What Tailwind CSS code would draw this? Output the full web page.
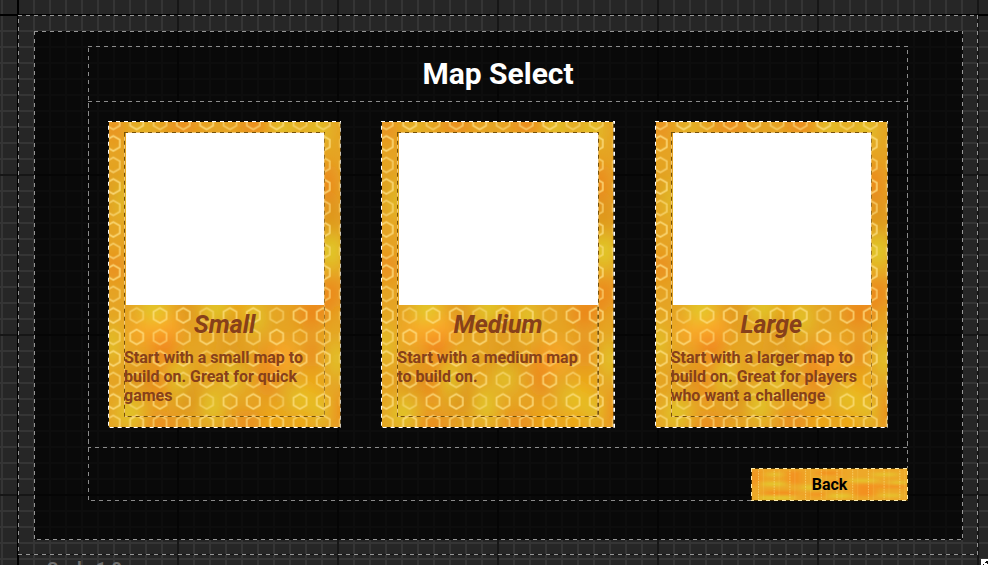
<!DOCTYPE html>
<html lang="en">
<head>
<meta charset="utf-8">
<meta name="viewport" content="width=device-width, initial-scale=1">
<title>Map Select</title>
<script src="https://cdn.jsdelivr.net/npm/@tailwindcss/browser@4"></script>
</head>
<body class="relative flex min-h-screen flex-col overflow-hidden bg-[#262626] font-[Roboto,sans-serif] font-bold">

<!-- Shared artwork -->
<svg class="absolute h-0 w-0" aria-hidden="true">
  <defs>
    <pattern id="grid" x="17" y="14" width="16" height="16" patternUnits="userSpaceOnUse">
      <path d="M0 0H16V2H2V16H0Z" fill="#353535"/>
    </pattern>
    <pattern id="gridMajor" x="17" y="14" width="160" height="160" patternUnits="userSpaceOnUse">
      <path d="M0 0H160V2H2V160H0Z" fill="#161616"/>
    </pattern>
    <filter id="soft" x="-50%" y="-50%" width="200%" height="200%"><feGaussianBlur stdDeviation="8 10"/></filter>
    <filter id="softSmall" x="-50%" y="-50%" width="200%" height="200%"><feGaussianBlur stdDeviation="5 1.4"/></filter>
    <path id="hex" d="M0 -7.5L6.5 -3.75V3.75L0 7.5L-6.5 3.75V-3.75Z"/>
    <pattern id="comb" x="-6.3" y="11.7" width="69.9" height="43" patternUnits="userSpaceOnUse">
      <g fill="none" stroke="#ffe287" stroke-width="1.7">
        <use href="#hex" x="11.6" y="10.8" opacity=".8"/>
        <use href="#hex" x="34.9" y="10.8" opacity=".55"/>
        <use href="#hex" x="58.2" y="10.8" opacity=".75"/>
        <use href="#hex" x="11.6" y="32.3" opacity=".65"/>
        <use href="#hex" x="34.9" y="32.3" opacity=".8"/>
        <use href="#hex" x="58.2" y="32.3" opacity=".6"/>
      </g>
    </pattern>
    <symbol id="honey" viewBox="0 0 233 307" preserveAspectRatio="none">
      <rect width="233" height="307" fill="#e5a424"/>
      <g filter="url(#soft)">
        <g fill="#dd941c">
          <ellipse cx="32" cy="257" rx="14" ry="12"/><ellipse cx="80" cy="275" rx="12" ry="20"/>
          <ellipse cx="78" cy="195" rx="9" ry="16"/><ellipse cx="125" cy="205" rx="12" ry="16"/>
          <ellipse cx="222" cy="95" rx="10" ry="26"/><ellipse cx="8" cy="70" rx="8" ry="18"/>
          <ellipse cx="125" cy="240" rx="18" ry="10"/>
        </g>
        <g fill="#f07a1c" opacity=".85">
          <ellipse cx="56" cy="226" rx="13" ry="17"/><ellipse cx="75" cy="4" rx="15" ry="8"/>
          <ellipse cx="147" cy="3" rx="16" ry="9"/><ellipse cx="160" cy="250" rx="7" ry="26"/>
          <ellipse cx="203" cy="192" rx="14" ry="12"/><ellipse cx="218" cy="62" rx="8" ry="18"/>
          <ellipse cx="6" cy="146" rx="8" ry="12"/><ellipse cx="50" cy="264" rx="7" ry="15"/>
          <ellipse cx="230" cy="290" rx="8" ry="14"/><ellipse cx="52" cy="306" rx="18" ry="8"/>
          <ellipse cx="222" cy="172" rx="10" ry="14"/><ellipse cx="138" cy="303" rx="18" ry="7"/>
          <ellipse cx="6" cy="8" rx="6" ry="12"/><ellipse cx="204" cy="232" rx="6" ry="14"/>
        </g>
        <g fill="#ffa82c">
          <ellipse cx="38" cy="210" rx="18" ry="10"/><ellipse cx="175" cy="236" rx="12" ry="14"/>
          <ellipse cx="62" cy="205" rx="12" ry="12"/>
        </g>
        <g fill="#dfda2e" opacity=".8">
          <ellipse cx="222" cy="130" rx="12" ry="16"/><ellipse cx="46" cy="188" rx="15" ry="12"/>
          <ellipse cx="108" cy="187" rx="13" ry="12"/><ellipse cx="147" cy="196" rx="9" ry="14"/>
          <ellipse cx="175" cy="7" rx="14" ry="9"/><ellipse cx="210" cy="9" rx="12" ry="10"/>
          <ellipse cx="22" cy="292" rx="13" ry="12"/><ellipse cx="105" cy="284" rx="9" ry="16"/>
          <ellipse cx="192" cy="277" rx="14" ry="9"/><ellipse cx="214" cy="288" rx="9" ry="11"/>
          <ellipse cx="15" cy="78" rx="5" ry="18"/><ellipse cx="70" cy="256" rx="7" ry="18"/>
          <ellipse cx="229" cy="238" rx="7" ry="18"/><ellipse cx="4" cy="222" rx="6" ry="20"/>
          <ellipse cx="124" cy="256" rx="9" ry="12"/><ellipse cx="35" cy="8" rx="10" ry="5"/>
        </g>
        <g fill="#fbab00">
          <ellipse cx="203" cy="267" rx="8" ry="8"/><ellipse cx="166" cy="300" rx="8" ry="8"/>
          <ellipse cx="194" cy="300" rx="8" ry="8"/><ellipse cx="130" cy="185" rx="7" ry="7"/>
        </g>
      </g>
      <rect width="233" height="307" fill="url(#comb)"/>
    </symbol>
    <pattern id="beads" x="7" width="15.7" height="2.6" patternUnits="userSpaceOnUse">
      <rect width="1" height="1.4" fill="#ffe58a" opacity=".65"/>
      <rect x="5" width="1" height="2.6" fill="#ffe58a" opacity=".16"/>
    </pattern>
    <symbol id="honeyBar" viewBox="0 0 157 33" preserveAspectRatio="none">
      <rect width="157" height="33" fill="#eda829"/>
      <g filter="url(#softSmall)" opacity=".8">
        <g fill="#f58a1f">
          <rect x="0" y="2" width="9" height="16"/><rect x="36" y="3" width="14" height="13"/>
          <rect x="14" y="23" width="32" height="4"/><rect x="66" y="3" width="22" height="4"/>
          <rect x="103" y="16" width="22" height="12"/><rect x="126" y="17" width="30" height="3"/>
          <rect x="58" y="25" width="18" height="3"/><rect x="84" y="12" width="12" height="3"/>
        </g>
        <g fill="#e2cf2e">
          <rect x="10" y="14" width="24" height="4"/><rect x="8" y="28" width="34" height="4"/>
          <rect x="52" y="17" width="14" height="5"/><rect x="98" y="11" width="28" height="3"/>
          <rect x="122" y="5" width="24" height="3"/><rect x="140" y="13" width="16" height="3"/>
          <rect x="78" y="26" width="22" height="4"/><rect x="128" y="26" width="22" height="3"/>
          <rect x="16" y="5" width="14" height="3"/>
        </g>
      </g>
      <rect width="157" height="33" fill="url(#beads)"/>
    </symbol>
  </defs>
</svg>

<!-- Canvas grid -->
<svg class="absolute inset-0 h-full w-full" aria-hidden="true">
  <rect width="100%" height="100%" fill="url(#grid)"/>
  <rect width="100%" height="100%" fill="url(#gridMajor)"/>
  <rect y="14" width="100%" height="2" fill="#000"/>
  <rect x="17" width="2" height="100%" fill="#000"/>
</svg>

<div class="relative mt-[15px] mr-[10px] mb-[10px] ml-[18px] flex flex-1 flex-col pt-4 pr-[15px] pb-[15px] pl-4">
  <svg class="pointer-events-none absolute inset-0 h-full w-full" aria-hidden="true">
    <rect width="100%" height="100%" fill="none" stroke="#161616" stroke-width="2"/>
    <rect width="100%" height="100%" fill="none" stroke="#969696" stroke-width="2" stroke-dasharray="4 4"/>
  </svg>

  <main class="relative flex flex-1 flex-col bg-black/75 pt-[15px] pr-[55px] pb-[39px] pl-[54px]">
    <svg class="pointer-events-none absolute inset-0 h-full w-full" aria-hidden="true">
      <rect width="100%" height="100%" fill="none" stroke="#0a0a0a" stroke-width="2"/>
      <rect width="100%" height="100%" fill="none" stroke="#969696" stroke-width="2" stroke-dasharray="4 4"/>
    </svg>

    <div class="relative flex flex-1 flex-col">
      <svg class="pointer-events-none absolute inset-0 h-full w-full" aria-hidden="true">
        <rect width="100%" height="100%" fill="none" stroke="#8c8c8c" stroke-width="2" stroke-dasharray="4 4"/>
      </svg>

      <h1 class="flex h-[55px] items-center justify-center text-[30px] leading-9 text-white">Map Select</h1>

      <div class="relative grid flex-1 grid-cols-3 gap-10 p-5">
        <svg class="pointer-events-none absolute inset-0 h-full w-full" aria-hidden="true">
          <rect width="100%" height="100%" fill="none" stroke="#8c8c8c" stroke-width="2" stroke-dasharray="4 4"/>
        </svg>

        <button type="button" class="relative flex flex-col px-4 py-[11px] text-left text-[#87401a]">
          <svg class="absolute inset-0 h-full w-full" aria-hidden="true">
            <use href="#honey" width="100%" height="100%"/>
            <rect width="100%" height="100%" fill="none" stroke="#1a1000" stroke-width="2"/>
            <rect width="100%" height="100%" fill="none" stroke="#fff" stroke-width="2" stroke-dasharray="4 4"/>
          </svg>
          <span class="relative flex w-full flex-1 flex-col">
            <svg class="absolute inset-0 h-full w-full" aria-hidden="true">
              <rect width="100%" height="100%" fill="none" stroke="#f0c878" stroke-width="2"/>
              <rect width="100%" height="100%" fill="none" stroke="#785208" stroke-width="2" stroke-dasharray="4 4"/>
            </svg>
            <span class="relative mt-px mr-px ml-[2px] h-[172px] bg-white"></span>
            <span class="relative mt-1 text-center text-[25px] leading-8 italic">Small</span>
            <span class="relative mt-[7px] pr-2 text-base leading-[19px]">Start with a small map to build on. Great for quick games</span>
          </span>
        </button>

        <button type="button" class="relative flex flex-col px-4 py-[11px] text-left text-[#87401a]">
          <svg class="absolute inset-0 h-full w-full" aria-hidden="true">
            <use href="#honey" width="100%" height="100%"/>
            <rect width="100%" height="100%" fill="none" stroke="#1a1000" stroke-width="2"/>
            <rect width="100%" height="100%" fill="none" stroke="#fff" stroke-width="2" stroke-dasharray="4 4"/>
          </svg>
          <span class="relative flex w-full flex-1 flex-col">
            <svg class="absolute inset-0 h-full w-full" aria-hidden="true">
              <rect width="100%" height="100%" fill="none" stroke="#f0c878" stroke-width="2"/>
              <rect width="100%" height="100%" fill="none" stroke="#785208" stroke-width="2" stroke-dasharray="4 4"/>
            </svg>
            <span class="relative mt-px mr-px ml-[2px] h-[172px] bg-white"></span>
            <span class="relative mt-1 text-center text-[25px] leading-8 italic">Medium</span>
            <span class="relative mt-[7px] pr-2 text-base leading-[19px]">Start with a medium map to build on.</span>
          </span>
        </button>

        <button type="button" class="relative flex flex-col px-4 py-[11px] text-left text-[#87401a]">
          <svg class="absolute inset-0 h-full w-full" aria-hidden="true">
            <use href="#honey" width="100%" height="100%"/>
            <rect width="100%" height="100%" fill="none" stroke="#1a1000" stroke-width="2"/>
            <rect width="100%" height="100%" fill="none" stroke="#fff" stroke-width="2" stroke-dasharray="4 4"/>
          </svg>
          <span class="relative flex w-full flex-1 flex-col">
            <svg class="absolute inset-0 h-full w-full" aria-hidden="true">
              <rect width="100%" height="100%" fill="none" stroke="#f0c878" stroke-width="2"/>
              <rect width="100%" height="100%" fill="none" stroke="#785208" stroke-width="2" stroke-dasharray="4 4"/>
            </svg>
            <span class="relative mt-px mr-px ml-[2px] h-[172px] bg-white"></span>
            <span class="relative mt-1 text-center text-[25px] leading-8 italic">Large</span>
            <span class="relative mt-[7px] pr-2 text-base leading-[19px]">Start with a larger map to build on. Great for players who want a challenge</span>
          </span>
        </button>
      </div>

      <div class="flex justify-end pt-5">
        <button type="button" class="relative h-[33px] w-[157px] text-base text-black">
          <svg class="absolute inset-0 h-full w-full" aria-hidden="true">
            <use href="#honeyBar" width="100%" height="100%"/>
            <rect width="100%" height="100%" fill="none" stroke="#4a3200" stroke-width="2"/>
            <rect width="100%" height="100%" fill="none" stroke="#ffeeb0" stroke-width="2" stroke-dasharray="4 4"/>
          </svg>
          <span class="relative">Back</span>
        </button>
      </div>
    </div>
  </main>
</div>

<p class="absolute bottom-0 left-[47px] h-[5px] overflow-hidden text-lg leading-[18px] text-[#6e6e6e]">Scale 1.0</p>
<svg class="absolute right-0 bottom-0 h-[6px] w-[7px]" viewBox="0 0 7 6" aria-hidden="true">
  <rect width="7" height="6" fill="#fff"/>
  <path d="M2 5h1v1H2zM4 3h1v1H4zM5 2h2v2H5zM6 4h1v1H6z" fill="#111"/>
</svg>
</body>
</html>
